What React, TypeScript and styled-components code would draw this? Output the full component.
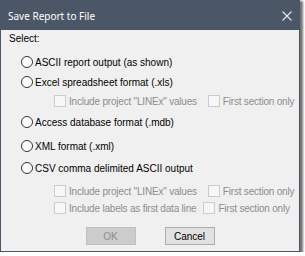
import styled, { createGlobalStyle } from "styled-components";
import React from "react";

const Global = createGlobalStyle`
    body {
        margin: 0;
        background: #ffffff;
        font-family: "Liberation Sans", Arial, sans-serif;
    }
`;

const Window = styled.div`
    width: 298px;
    height: 250px;
    border: 1px solid #4a5566;
    background: #f0f0f0;
    box-shadow: 2px 2px 2px 1px rgba(0, 0, 0, 0.55);
    display: flex;
    flex-direction: column;
`;

const TitleBar = styled.div`
    height: 29px;
    background: #4b5667;
    display: flex;
    align-items: center;
    justify-content: space-between;
    padding: 0 8px 0 7px;
    flex-shrink: 0;
`;

const Title = styled.span`
    color: #ffffff;
    font-family: "Noto Sans", "Open Sans", sans-serif;
    font-size: 10px;
    letter-spacing: 0;
`;

const Close = styled.svg`
    width: 10px;
    height: 10px;
    margin-right: -1px;
`;

//━━━━━━━━━━━━━━━━━━━━━━━━━━━━━━━━━━━━
const Content = styled.div`
    display: flex;
    flex-direction: column;
    padding-left: 8px;
    font-size: 10px;
    color: #000;
`;

const Row = styled.div<{ $mt: number; $indent?: number }>`
    display: flex;
    align-items: center;
    height: 16px;
    white-space: nowrap;
    margin-top: ${(p) => p.$mt}px;
    margin-left: ${(p) => p.$indent ?? 0}px;
`;

const Radio = styled.span`
    width: 10px;
    height: 10px;
    border: 1px solid #333333;
    border-radius: 50%;
    background: #ffffff;
    margin-right: 2px;
    flex-shrink: 0;
`;

const Check = styled.span<{ $ml?: number }>`
    width: 10px;
    height: 10px;
    border: 1px solid #cccccc;
    background: #f7f7f7;
    margin-left: ${(p) => p.$ml ?? 0}px;
    margin-right: 3px;
    flex-shrink: 0;
`;

const Dim = styled.span`
    color: #8d8d8d;
    letter-spacing: -0.2px;
`;

//━━━━━━━━━━━━━━━━━━━━━━━━━━━━━━━━━━━━
const Buttons = styled.div`
    display: flex;
    justify-content: center;
    gap: 29px;
    margin-top: 11px;
    margin-left: -8px;
`;

const Button = styled.button<{ $disabled?: boolean }>`
    width: 50px;
    height: 18px;
    padding: 0;
    font-family: "Liberation Sans", Arial, sans-serif;
    font-size: 10px;
    background: ${(p) => (p.$disabled ? "#cccccc" : "#e1e1e1")};
    border: 1px solid ${(p) => (p.$disabled ? "#bfbfbf" : "#adadad")};
    color: ${(p) => (p.$disabled ? "#8d8d8d" : "#000000")};
`;

function App() {
    return (
        <>
            <Global />
            <Window>
                <TitleBar>
                    <Title>Save Report to File</Title>
                    <Close viewBox="0 0 10 10">
                        <path d="M0.5 0.5 L9.5 9.5 M9.5 0.5 L0.5 9.5" stroke="#e6e8eb" strokeWidth="1.1" />
                    </Close>
                </TitleBar>
                <Content>
                    <Row $mt={0}>Select:</Row>
                    <Row $mt={8} $indent={12}>
                        <Radio />ASCII report output (as shown)
                    </Row>
                    <Row $mt={4} $indent={12}>
                        <Radio />Excel spreadsheet format (.xls)
                    </Row>
                    <Row $mt={3} $indent={45}>
                        <Check />
                        <Dim>Include project "LINEx" values</Dim>
                        <Check $ml={11} />
                        <Dim>First section only</Dim>
                    </Row>
                    <Row $mt={5} $indent={12}>
                        <Radio />Access database format (.mdb)
                    </Row>
                    <Row $mt={8} $indent={12}>
                        <Radio />XML format (.xml)
                    </Row>
                    <Row $mt={6} $indent={12}>
                        <Radio />CSV comma delimited ASCII output
                    </Row>
                    <Row $mt={7} $indent={45}>
                        <Check />
                        <Dim>Include project "LINEx" values</Dim>
                        <Check $ml={11} />
                        <Dim>First section only</Dim>
                    </Row>
                    <Row $mt={1} $indent={45}>
                        <Check />
                        <Dim>Include labels as first data line</Dim>
                        <Check $ml={7} />
                        <Dim>First section only</Dim>
                    </Row>
                    <Buttons>
                        <Button $disabled>OK</Button>
                        <Button>Cancel</Button>
                    </Buttons>
                </Content>
            </Window>
        </>
    );
}

export default App;
